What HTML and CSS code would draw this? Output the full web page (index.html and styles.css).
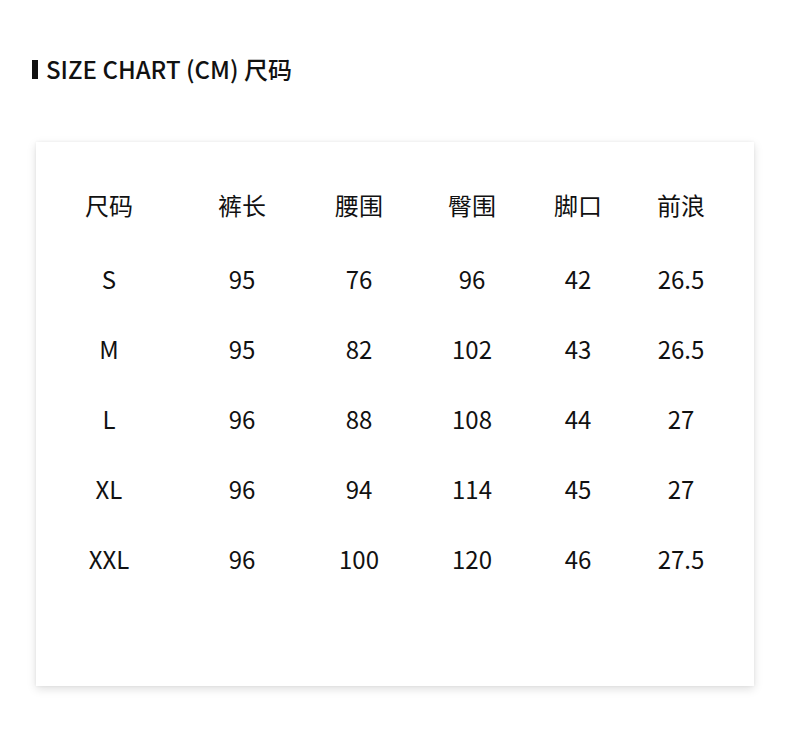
FILE: index.html
```html
<!DOCTYPE html>
<html lang="zh">
<head>
<meta charset="utf-8">
<link rel="stylesheet" href="styles.css">
</head>
<body>
<div class="page">
  <h1 class="title"><span class="bar"></span>SIZE CHART (CM) 尺码</h1>
  <div class="card">
    <div class="grid">
      <div class="cell">尺码</div><div class="cell">裤长</div><div class="cell">腰围</div><div class="cell">臀围</div><div class="cell">脚口</div><div class="cell">前浪</div>
      <div class="cell">S</div><div class="cell">95</div><div class="cell">76</div><div class="cell">96</div><div class="cell">42</div><div class="cell">26.5</div>
      <div class="cell">M</div><div class="cell">95</div><div class="cell">82</div><div class="cell">102</div><div class="cell">43</div><div class="cell">26.5</div>
      <div class="cell">L</div><div class="cell">96</div><div class="cell">88</div><div class="cell">108</div><div class="cell">44</div><div class="cell">27</div>
      <div class="cell">XL</div><div class="cell">96</div><div class="cell">94</div><div class="cell">114</div><div class="cell">45</div><div class="cell">27</div>
      <div class="cell">XXL</div><div class="cell">96</div><div class="cell">100</div><div class="cell">120</div><div class="cell">46</div><div class="cell">27.5</div>
    </div>
  </div>
</div>
</body>
</html>
```
FILE: styles.css
```css
* { box-sizing: border-box; }
html, body { margin: 0; padding: 0; background: #fff; }
body {
  font-family: "Noto Sans CJK SC", "Noto Sans", sans-serif;
  color: #111;
  width: 790px;
  height: 750px;
  overflow: hidden;
}
.page {
  padding: 53px 36px 0 32px;
}
.title {
  margin: 0;
  display: flex;
  align-items: center;
  gap: 8px;
  font-size: 24px;
  font-weight: 500;
  line-height: 32px;
  height: 32px;
}
.bar {
  width: 6px;
  height: 19px;
  background: #111;
}
.card {
  margin-top: 57px;
  margin-left: 4px;
  width: 718px;
  height: 544px;
  background: #fff;
  box-shadow: 0 3px 9px rgba(0,0,0,0.13), 0 0 3px rgba(0,0,0,0.06);
  padding-top: 24px;
}
.grid {
  display: grid;
  grid-template-columns: 146px 120px 114px 112px 100px 106px;
  grid-template-rows: 78px repeat(5, 70px);
}
.cell {
  display: flex;
  align-items: center;
  justify-content: center;
  font-size: 24px;
  line-height: 1;
}
```
